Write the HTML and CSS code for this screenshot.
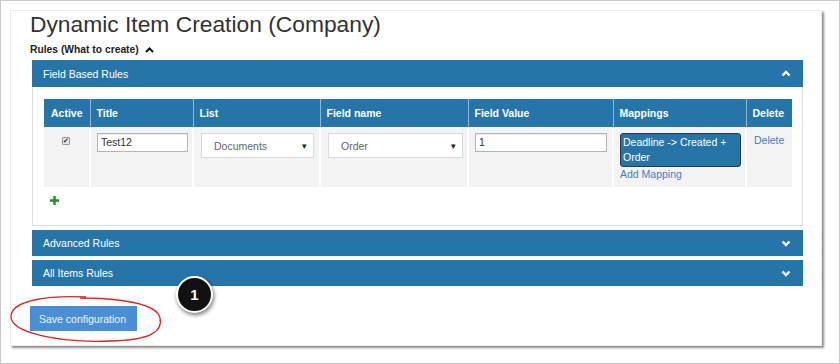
FILE: index.html
```html
<!DOCTYPE html>
<html lang="en">
  <head>
    <meta charset="UTF-8" />
    <title>Dynamic Item Creation</title>
    <link rel="stylesheet" href="styles.css">
  </head>
  <body>
    <div class="frame">
      <div class="sheet">
        <h1 class="title">Dynamic Item Creation (Company)</h1>
        <div class="rules-label">Rules (What to create)
          <svg class="caret" width="9" height="6" viewBox="0 0 9 6"><path d="M1 5 L4.5 1.5 L8 5" /></svg>
        </div>

        <div class="panel-group">
          <div class="panel">
            <div class="panel-heading">
              <span>Field Based Rules</span>
              <svg class="chev" width="10" height="7" viewBox="0 0 10 7"><path d="M1.5 5.5 L5 2 L8.5 5.5" /></svg>
            </div>
            <div class="panel-body">
              <table class="rules">
                <colgroup>
                  <col style="width:46px"><col style="width:103px"><col style="width:127px">
                  <col style="width:148px"><col style="width:145px"><col style="width:133px"><col style="width:46px">
                </colgroup>
                <thead>
                  <tr>
                    <th>Active</th>
                    <th>Title</th>
                    <th>List</th>
                    <th>Field name</th>
                    <th>Field Value</th>
                    <th>Mappings</th>
                    <th>Delete</th>
                  </tr>
                </thead>
                <tbody>
                  <tr>
                    <td class="center"><span class="check">&#10004;</span></td>
                    <td><div class="input title-input">Test12</div></td>
                    <td><div class="select list-select"><span>Documents</span><span class="arrow">&#9662;</span></div></td>
                    <td><div class="select field-select"><span>Order</span><span class="arrow">&#9662;</span></div></td>
                    <td><div class="input value-input">1</div></td>
                    <td>
                      <div class="mapping">Deadline -&gt; Created + Order</div>
                      <a class="link">Add Mapping</a>
                    </td>
                    <td><a class="link delete">Delete</a></td>
                  </tr>
                </tbody>
              </table>
              <div class="add">
                <svg width="9" height="9" viewBox="0 0 9 9"><path d="M3.3 0 H5.7 V3.3 H9 V5.7 H5.7 V9 H3.3 V5.7 H0 V3.3 H3.3 Z" /></svg>
              </div>
            </div>
          </div>

          <div class="panel">
            <div class="panel-heading">
              <span>Advanced Rules</span>
              <svg class="chev" width="10" height="7" viewBox="0 0 10 7"><path d="M1.5 1.5 L5 5 L8.5 1.5" /></svg>
            </div>
          </div>

          <div class="panel">
            <div class="panel-heading">
              <span>All Items Rules</span>
              <svg class="chev" width="10" height="7" viewBox="0 0 10 7"><path d="M1.5 1.5 L5 5 L8.5 1.5" /></svg>
            </div>
          </div>
        </div>

        <button class="save">Save configuration</button>
      </div>

      <!-- annotation layer on top of the screenshot -->
      <svg class="scribble" width="840" height="364" viewBox="0 0 840 364">
        <path d="M86 297 C50 295, 12 300, 11 316 C10 333, 60 343, 110 341 C150 340, 163 332, 160 318 C157 304, 122 298, 80 298" />
      </svg>
      <div class="marker">1</div>
    </div>
  </body>
</html>
```

FILE: styles.css
```css
* {
  box-sizing: border-box;
}
body {
  margin: 0;
  font-family: "Liberation Sans", Arial, sans-serif;
  background: #fff;
}
.frame {
  position: relative;
  width: 840px;
  height: 364px;
  border: 1px solid #c9c9c9;
  background: #fff;
  overflow: hidden;
}
.sheet {
  margin: 9px 0 0 9px;
  width: 812px;
  height: 336px;
  padding: 0 19px;
  border: 1px solid #ececec;
  background: #fff;
  box-shadow: 2px 2px 2px rgba(0, 0, 0, 0.45);
}
.title {
  margin: 0;
  font-size: 22.8px;
  line-height: 26px;
  font-weight: normal;
  color: #333;
}
.rules-label {
  margin-top: 6px;
  font-size: 10.3px;
  line-height: 14px;
  font-weight: bold;
  color: #222;
}
.caret {
  margin-left: 3px;
  vertical-align: 0;
}
.caret path {
  fill: none;
  stroke: #111;
  stroke-width: 2;
}
.panel-group {
  margin: 3px 0 0 2px;
  width: 771px;
}
.panel + .panel {
  margin-top: 4px;
}
.panel-heading {
  height: 27px;
  padding: 0 12px 0 11px;
  display: flex;
  align-items: center;
  justify-content: space-between;
  background: #2675a9;
  color: #fff;
  font-size: 10.5px;
}
.panel + .panel .panel-heading {
  height: 26px;
}
.chev path {
  fill: none;
  stroke: #fff;
  stroke-width: 2.4;
}
.panel-body {
  border: 1px solid #dedede;
  border-top: 0;
  padding: 12px 9px 20px 11px;
}
.rules {
  width: 748px;
  border-collapse: collapse;
  table-layout: fixed;
  font-size: 10.5px;
}
.rules th {
  height: 28px;
  padding: 0 6px;
  text-align: left;
  background: #2675a9;
  color: #fff;
  font-weight: bold;
  border-left: 1px solid #8fb6d2;
}
.rules th:first-child {
  border-left: 0;
  padding-left: 7px;
}
.rules td {
  height: 60px;
  padding: 6px 6px 0;
  vertical-align: top;
  background: #f3f3f3;
  border-left: 2px solid #fff;
}
.rules td:first-child {
  border-left: 0;
}
.center {
  text-align: center;
}
.check {
  display: inline-block;
  width: 8px;
  height: 8px;
  margin: 2px 2px 0 0;
  border: 1px solid #999;
  border-radius: 1px;
  background: #e6e6e6;
  color: #333;
  font-size: 7px;
  line-height: 6px;
  text-align: center;
}
.input {
  height: 19px;
  padding: 0 3px;
  border: 1px solid #b5b5b5;
  background: #fff;
  color: #333;
  line-height: 17px;
  box-shadow: inset 0 1px 1px rgba(0, 0, 0, 0.08);
}
.title-input {
  width: 91px;
}
.value-input {
  width: 132px;
}
.select {
  height: 25px;
  margin-left: 1px;
  padding: 0 6px 0 12px;
  display: flex;
  align-items: center;
  justify-content: space-between;
  border: 1px solid #dadada;
  background: #fff;
  color: #666;
}
.list-select {
  width: 113px;
}
.field-select {
  width: 135px;
}
.arrow {
  color: #222;
  font-size: 9px;
}
.mapping {
  width: 121px;
  padding: 1px 2px;
  border: 1px solid #2a3a48;
  border-radius: 3px;
  background: #2675a9;
  color: #fff;
  line-height: 15px;
}
.link {
  display: block;
  color: #3b7fc4;
  line-height: 15px;
}
.delete {
  margin: 0 0 0 1px;
}
.add {
  height: 9px;
  margin: 9px 0 0 6px;
}
.add svg {
  display: block;
}
.add path {
  fill: #2a8a2a;
}
.save {
  margin-top: 20px;
  height: 25px;
  width: 107px;
  padding: 0 9px;
  border: 0;
  background: #4a8fd5;
  color: #eef3fb;
  font-family: "Liberation Sans", Arial, sans-serif;
  font-size: 10.5px;
  text-align: left;
}
.scribble {
  position: absolute;
  left: -1px;
  top: -1px;
  pointer-events: none;
}
.scribble path {
  fill: none;
  stroke: #e02424;
  stroke-width: 1.3;
}
.marker {
  position: absolute;
  left: 175px;
  top: 275px;
  width: 37px;
  height: 37px;
  border: 2px solid #fff;
  border-radius: 50%;
  background: #111;
  color: #fff;
  font-size: 15px;
  font-weight: bold;
  line-height: 33px;
  text-align: center;
  box-shadow: 1px 2px 4px rgba(0, 0, 0, 0.55);
}
```
